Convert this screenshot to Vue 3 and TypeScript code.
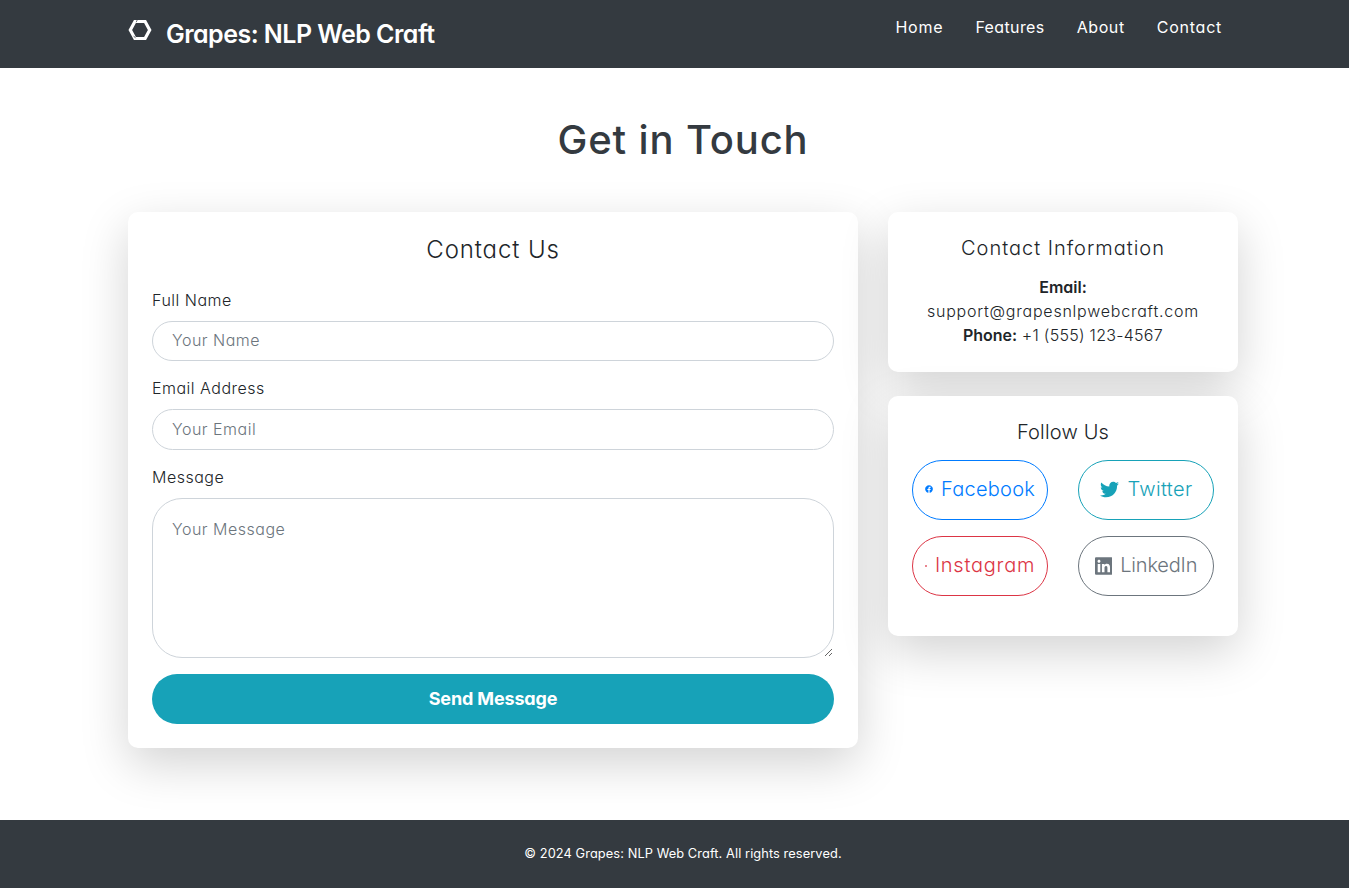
<script setup lang="ts">
interface NavLink { label: string; key: string }
const links: NavLink[] = [
  { label: 'Home', key: 'home' },
  { label: 'Features', key: 'features' },
  { label: 'About', key: 'about' },
  { label: 'Contact', key: 'contact' },
]
interface Social { label: string; key: string; box: string; path: string }
const socials: Social[] = [
  { label: 'Facebook', key: 'facebook', box: '0 0 512 512', path: 'M504 256C504 119 393 8 256 8S8 119 8 256c0 123.78 90.69 226.38 209.25 245V327.69h-63V256h63v-54.64c0-62.15 37-96.48 93.67-96.48 27.14 0 55.52 4.84 55.52 4.84v61h-31.28c-30.8 0-40.41 19.12-40.41 38.77V256h68.78l-11 71.69h-57.78V501C413.31 482.38 504 379.78 504 256z' },
  { label: 'Twitter', key: 'twitter', box: '0 0 512 512', path: 'M459.37 151.716c.325 4.548.325 9.097.325 13.645 0 138.72-105.583 298.558-298.558 298.558-59.452 0-114.68-17.219-161.137-47.106 8.447.974 16.568 1.299 25.34 1.299 49.055 0 94.213-16.568 130.274-44.832-46.132-.975-84.792-31.188-98.112-72.772 6.498.974 12.995 1.624 19.818 1.624 9.421 0 18.843-1.3 27.614-3.573-48.081-9.747-84.143-51.98-84.143-102.985v-1.299c13.969 7.797 30.214 12.67 47.431 13.319-28.264-18.843-46.781-51.005-46.781-87.391 0-19.492 5.197-37.36 14.294-52.954 51.655 63.675 129.3 105.258 216.365 109.807-1.624-7.797-2.599-15.918-2.599-24.04 0-57.828 46.782-104.934 104.934-104.934 30.213 0 57.502 12.67 76.67 33.137 23.715-4.548 46.456-13.32 66.599-25.34-7.798 24.366-24.366 44.833-46.132 57.827 21.117-2.273 41.584-8.122 60.426-16.243-14.292 20.791-32.161 39.308-52.628 54.253z' },
  { label: 'Instagram', key: 'instagram', box: '0 0 20 20', path: 'M2 2H18V18H2z' },
  { label: 'LinkedIn', key: 'linkedin', box: '0 0 448 512', path: 'M416 32H31.9C14.3 32 0 46.5 0 64.3v383.4C0 465.5 14.3 480 31.9 480H416c17.6 0 32-14.5 32-32.3V64.3c0-17.8-14.4-32.3-32-32.3zM135.4 416H69V202.2h66.5V416zm-33.2-243c-21.3 0-38.5-17.3-38.5-38.5S80.9 96 102.2 96c21.2 0 38.5 17.3 38.5 38.5 0 21.3-17.2 38.5-38.5 38.5zm282.1 243h-66.4V312c0-24.8-.5-56.7-34.5-56.7-34.6 0-39.9 27-39.9 54.9V416h-66.4V202.2h63.7v29.2h.9c8.9-16.8 30.6-34.5 62.9-34.5 67.2 0 79.7 44.3 79.7 101.9V416z' },
]
</script>

<template>
  <div class="viewport">
    <div class="page">
      <header class="navbar">
        <div class="container nav-inner">
          <a class="brand">
            <svg class="logo" viewBox="0 0 24 24">
              <path d="M6.9 3.5H17.1L21.7 12 17.1 20.5H6.9L2.3 12z" fill="none" stroke="#fff" stroke-width="3.2" />
              <path d="M8.2 4.2L9.4 1.6M5.6 17.8L7.6 20.2" stroke="#343a40" stroke-width=".7" />
            </svg>
            <span class="brand-name">Grapes: NLP Web Craft</span>
          </a>
          <nav class="links">
            <a v-for="l in links" :key="l.key" :class="['link', l.key]">{{ l.label }}</a>
          </nav>
        </div>
      </header>
      <main class="container main">
        <h1>Get in Touch</h1>
        <div class="row">
          <section class="card form-card">
            <h3>Contact Us</h3>
            <form @submit.prevent>
              <label for="name">Full Name</label>
              <input id="name" class="field" type="text" placeholder="Your Name" />
              <label for="email">Email Address</label>
              <input id="email" class="field" type="email" placeholder="Your Email" />
              <label for="message">Message</label>
              <textarea id="message" class="field area" placeholder="Your Message"></textarea>
              <button class="send" type="submit">Send Message</button>
            </form>
          </section>
          <aside class="side">
            <section class="card">
              <h5 class="info-title">Contact Information</h5>
              <p class="info">
                <strong>Email:</strong><br />
                <span class="mail">support@grapesnlpwebcraft.com</span><br />
                <strong>Phone:</strong> <span class="tel">+1 (555) 123-4567</span>
              </p>
            </section>
            <section class="card">
              <h5 class="follow-title">Follow Us</h5>
              <div class="socials">
                <a v-for="s in socials" :key="s.key" :class="['social', s.key]">
                  <svg class="icon" :viewBox="s.box"><path :d="s.path" fill="currentColor" /></svg>
                  <span>{{ s.label }}</span>
                </a>
              </div>
            </section>
          </aside>
        </div>
      </main>
      <footer class="footer">© 2024 Grapes: NLP Web Craft. All rights reserved.</footer>
    </div>
  </div>
</template>

<style>
body { margin: 0; background: #fff; }
</style>

<style scoped>
*, *::before, *::after { box-sizing: border-box; }
.viewport { width: 100%; height: 888px; overflow: hidden; }
.page {
  width: 1366px; height: 888px; display: flex; flex-direction: column;
  font-family: Inter, "Open Sans", "Liberation Sans", sans-serif;
  font-feature-settings: "cv11"; font-weight: 300; font-size: 16px; line-height: 24px; color: #212529;
}
.container { width: 1140px; margin: 0 auto; padding: 0 15px; }
.navbar { height: 68px; background: #343a40; color: #fff; }
.nav-inner { display: flex; justify-content: space-between; align-items: flex-start; padding-top: 8px; }
.brand { display: flex; align-items: flex-start; gap: 14px; }
.logo { width: 24px; height: 24px; margin-top: 10px; }
.brand-name { font-size: 25px; line-height: 36px; font-weight: 600; margin-top: 8px; letter-spacing: -.53px; }
.links { display: flex; }
.link { padding: 7px 16px 9px; font-weight: 400; }
.home { letter-spacing: .8px; }
.features { letter-spacing: .38px; }
.about { letter-spacing: .6px; }
.contact { letter-spacing: .75px; }
.main { flex: 1; padding-top: 48px; }
h1, h3, h5 { margin: 0; text-align: center; font-weight: 300; }
h1 { font-size: 40px; line-height: 48px; font-weight: 500; color: #343a40; margin-bottom: 48px; letter-spacing: .85px; }
h3 { font-size: 24px; line-height: 28.8px; margin-bottom: 24px; letter-spacing: .88px; }
h5 { font-size: 20px; line-height: 24px; margin-bottom: 16px; }
.info-title { letter-spacing: .98px; }
.follow-title { letter-spacing: .18px; }
.row { display: flex; gap: 30px; align-items: flex-start; }
.card { background: #fff; border-radius: 10px; padding: 24px; box-shadow: 0 16px 48px rgba(0, 0, 0, .175); }
.form-card { width: 730px; height: 536px; }
.side { width: 350px; display: flex; flex-direction: column; gap: 24px; }
label { display: block; padding-bottom: 9px; margin-top: -1px; letter-spacing: .5px; }
.field {
  display: block; width: 100%; height: 40.5px; margin: 0 0 16px; padding: 0 19px 2px; border: 1px solid #ced4da; border-radius: 30px;
  background: #fff; font: inherit; font-feature-settings: inherit; letter-spacing: .5px; color: #495057; outline: none;
}
.field::placeholder { color: #6c757d; opacity: 1; }
.area { height: 160px; padding-top: 18px; resize: vertical; }
.send {
  display: block; width: 100%; height: 50px; border: 0; border-radius: 30px; background: #17a2b8; color: #fff;
  font: inherit; font-feature-settings: inherit; font-size: 18px; font-weight: 700; letter-spacing: -.15px;
}
.info { margin: -1px 0 1px; text-align: center; }
.info strong { font-weight: 600; }
.mail { letter-spacing: .77px; }
.tel { letter-spacing: .28px; }
.socials { display: grid; grid-template-columns: 136px 136px; column-gap: 30px; row-gap: 16px; padding-bottom: 16px; }
.social {
  height: 60px; padding-bottom: 2px; border: 1px solid; border-radius: 30px;
  display: flex; align-items: center; justify-content: center; gap: 8px; font-size: 20px;
}
.icon { width: 20px; height: 20px; flex: none; }
.facebook { color: #007bff; letter-spacing: .25px; }
.facebook .icon { width: 8px; height: 8px; }
.twitter { color: #17a2b8; letter-spacing: .37px; }
.twitter .icon { width: 19px; height: 19px; margin-left: 1px; }
.instagram { color: #dc3545; letter-spacing: .74px; }
.instagram .icon { width: 2px; height: 2px; margin-top: 2px; }
.linkedin { color: #6c757d; letter-spacing: -.19px; }
.linkedin .icon { width: 17.5px; margin-top: 1px; }
.footer {
  height: 68px; background: #343a40; color: #fff; display: flex; align-items: center; justify-content: center;
  font-size: 12.8px; font-weight: 400; letter-spacing: .09px;
}
</style>
